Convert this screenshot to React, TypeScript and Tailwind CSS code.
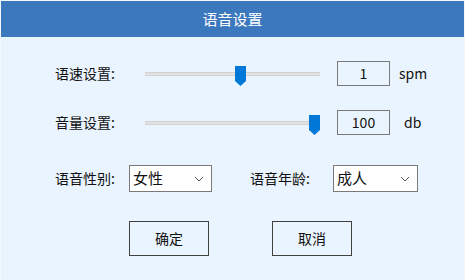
import React from "react";

const font = { fontFamily: '"Noto Sans CJK SC", "Noto Sans", sans-serif' };

function Thumb() {
  return (
    <svg width="11" height="20" viewBox="0 0 11 20" className="absolute top-[-7px]">
      <path d="M0 0 H11 V15 L5.5 20 L0 15 Z" fill="#0078d7" />
    </svg>
  );
}

function Slider({ pos }: { pos: number }) {
  return (
    <div className="relative w-[175px] h-[4px] bg-[#e2e2e2] border-y border-[#d2d2d2]">
      <div className="absolute top-0" style={{ left: pos }}>
        <Thumb />
      </div>
    </div>
  );
}

function Chevron() {
  return (
    <svg width="10" height="6" viewBox="0 0 10 6">
      <path d="M1 1 L5 5 L9 1" fill="none" stroke="#555" strokeWidth="1" />
    </svg>
  );
}

function Select({ value, w }: { value: string; w: string }) {
  return (
    <div className={`${w} h-[27px] bg-white border border-[#7a7a7a] flex items-center justify-between pl-[3px] pr-[7px]`}>
      <span className="text-[15px] text-[#111]">{value}</span>
      <Chevron />
    </div>
  );
}

export default function App() {
  return (
    <div className="w-[465px] h-[280px] bg-[#f4f7fb] pt-[1px] px-[1px] overflow-hidden" style={font}>
      <div className="h-[279px] bg-[#eaf4fe] flex flex-col">
        <div className="h-[36px] bg-[#3c78be] flex items-center justify-center text-white text-[15px]">
          语音设置
        </div>
        <div className="flex flex-col pl-[54px] text-[#111]">
          <div className="mt-[24px] h-[25px] flex items-center">
            <span className="w-[90px] text-[14px]">语速设置:</span>
            <Slider pos={90} />
            <div className="ml-[17px] w-[53px] h-[25px] border border-[#7a7a7a] flex items-center justify-center text-[14px]">1</div>
            <span className="ml-[9px] text-[14px]">spm</span>
          </div>
          <div className="mt-[24px] h-[25px] flex items-center">
            <span className="w-[90px] text-[14px]">音量设置:</span>
            <Slider pos={164} />
            <div className="ml-[17px] w-[53px] h-[25px] border border-[#7a7a7a] flex items-center justify-center text-[14px]">100</div>
            <span className="ml-[14px] text-[14px]">db</span>
          </div>
          <div className="mt-[30px] h-[27px] flex items-center">
            <span className="w-[74px] text-[14px]">语音性别:</span>
            <Select value="女性" w="w-[83px]" />
            <span className="ml-[38px] w-[83px] text-[14px]">语音年龄:</span>
            <Select value="成人" w="w-[85px]" />
          </div>
          <div className="mt-[29px] flex pl-[74px] gap-[63px]">
            <div className="w-[80px] h-[35px] border-[1.5px] border-[#404040] flex items-center justify-center text-[14px]">确定</div>
            <div className="w-[80px] h-[35px] border-[1.5px] border-[#404040] flex items-center justify-center text-[14px]">取消</div>
          </div>
        </div>
      </div>
    </div>
  );
}
